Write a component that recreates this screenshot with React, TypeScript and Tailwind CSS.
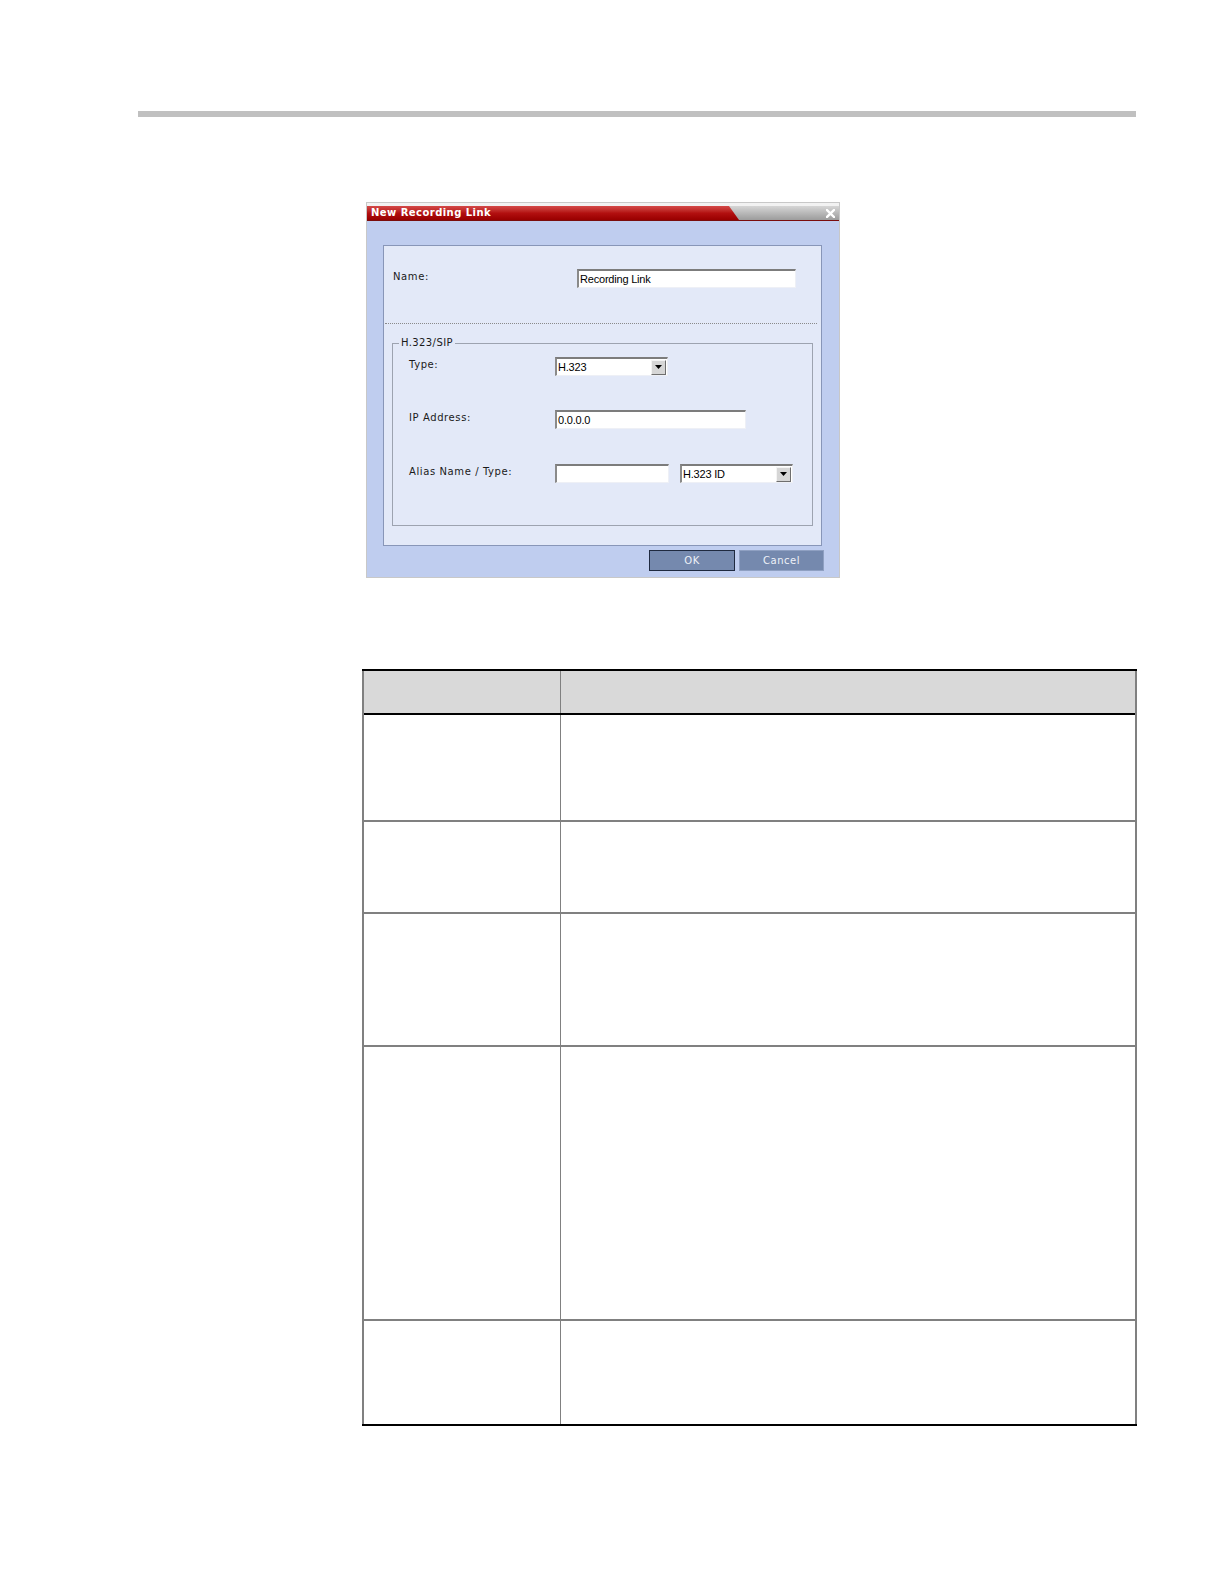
import React from 'react';

const labelFont = { fontFamily: '"DejaVu Sans", Verdana, sans-serif' };
const inputFont = { fontFamily: '"Liberation Sans", Arial, sans-serif' };

const TextBox: React.FC<{ width: string; value?: string }> = ({ width, value }) => (
  <div
    className={`${width} h-[19px] bg-white border-t-2 border-l-2 border-b border-r border-t-[#7c7c7c] border-l-[#8a8a8a] border-b-[#eef0f6] border-r-[#eef0f6] flex items-center pl-[1px] text-[11px] leading-none text-black tracking-[-0.2px]`}
    style={inputFont}
  >
    {value}
  </div>
);

const SelectBox: React.FC<{ width: string; value: string }> = ({ width, value }) => (
  <div
    className={`${width} h-[19px] bg-white border-t-2 border-l-2 border-b border-r border-t-[#7c7c7c] border-l-[#8a8a8a] border-b-[#eef0f6] border-r-[#eef0f6] flex items-center justify-between text-[11px] leading-none text-black tracking-[-0.2px]`}
    style={inputFont}
  >
    <span className="pl-[1px]">{value}</span>
    <div className="w-[15px] h-[15px] mr-[1px] bg-[#d6d6d6] border border-t-[#f4f4f4] border-l-[#f4f4f4] border-b-[#6e6e6e] border-r-[#6e6e6e] flex items-center justify-center">
      <svg width="7" height="4" viewBox="0 0 7 4">
        <path d="M0 0 H7 L3.5 4 Z" fill="#000" />
      </svg>
    </div>
  </div>
);

const Row: React.FC<{ label: string; children: React.ReactNode; className?: string }> = ({ label, children, className }) => (
  <div className={`flex items-center h-[19px] ${className ?? ''}`}>
    <div className="w-[162px] pl-[16px] pb-[4px] text-[10px] leading-none tracking-[0.6px] text-[#1a1a1a]" style={labelFont}>
      {label}
    </div>
    {children}
  </div>
);

const TableRow: React.FC<{ height: string; last?: boolean }> = ({ height, last }) => (
  <div className={`flex ${height} ${last ? '' : 'border-b-2 border-[#808080]'}`}>
    <div className="w-[197px] border-r border-[#808080]" />
    <div className="flex-1" />
  </div>
);

export default function App() {
  return (
    <div className="w-[1224px] h-[1584px] bg-white flex flex-col">
      {/* top rule */}
      <div className="mt-[111px] ml-[138px] w-[998px] h-[6px] bg-[#c0c0c0]" />

      {/* dialog */}
      <div className="mt-[85px] ml-[366px] w-[474px] h-[376px] border border-[#c8c8c8] bg-[#bfcdef] flex flex-col">
        <div className="h-[3px] bg-[#f2f2f2]" />
        <div className="h-[15px] flex bg-gradient-to-b from-[#d6d6d6] to-[#9c9c9c] border-b border-[#7a0c0c]">
          <div
            className="w-[372px] h-full bg-gradient-to-b from-[#d44848] via-[#b31010] to-[#980000] [clip-path:polygon(0_0,362px_0,372px_100%,0_100%)] flex items-center pl-[4px] text-white text-[10px] font-bold leading-none tracking-[0.45px]"
            style={labelFont}
          >
            New Recording Link
          </div>
          <div className="flex-1" />
          <div className="w-[14px] flex items-center justify-center mr-[2px]">
            <svg width="9" height="9" viewBox="0 0 9 9">
              <path d="M1 1 L8 8 M8 1 L1 8" stroke="#ffffff" strokeWidth="2.4" strokeLinecap="square" />
            </svg>
          </div>
        </div>

        {/* panel */}
        <div className="mt-[24px] ml-[16px] w-[439px] h-[301px] bg-[#e3e9f8] border border-[#8896b8] flex flex-col">
          <div className="mt-[23px] flex items-center h-[19px]">
            <div className="w-[193px] pl-[9px] pb-[4px] text-[10px] leading-none tracking-[0.6px] text-[#1a1a1a]" style={labelFont}>
              Name:
            </div>
            <TextBox width="w-[219px]" value="Recording Link" />
          </div>

          <div className="mt-[35px] ml-[1px] mr-[4px] border-t border-dotted border-[#8a8a8a]" />

          <fieldset className="mt-[13px] ml-[8px] w-[421px] h-[189px] border border-[#9da3b0]">
            <legend className="ml-[6px] px-[2px] text-[10px] leading-[12px] tracking-[0.4px] text-[#1a1a1a]" style={labelFont}>
              H.323/SIP
            </legend>
            <Row label="Type:" className="mt-[8px]">
              <SelectBox width="w-[113px]" value="H.323" />
            </Row>
            <Row label="IP Address:" className="mt-[34px]">
              <TextBox width="w-[191px]" value="0.0.0.0" />
            </Row>
            <Row label="Alias Name / Type:" className="mt-[35px]">
              <TextBox width="w-[114px]" />
              <div className="ml-[11px]">
                <SelectBox width="w-[113px]" value="H.323 ID" />
              </div>
            </Row>
          </fieldset>
        </div>

        {/* buttons */}
        <div className="mt-[4px] flex justify-end gap-[4px] pr-[15px]">
          <button
            className="w-[86px] h-[21px] bg-[#7589ae] border border-[#1f2a40] text-[#eef1f8] text-[10px] leading-none tracking-[0.5px]"
            style={labelFont}
          >
            OK
          </button>
          <button
            className="w-[85px] h-[21px] bg-[#7589ae] border border-[#8fa0c2] text-[#eef1f8] text-[10px] leading-none tracking-[0.5px]"
            style={labelFont}
          >
            Cancel
          </button>
        </div>
      </div>

      {/* table */}
      <div className="mt-[91px] ml-[362px] w-[775px] border-t-2 border-b-2 border-black">
        <div className="border-l-2 border-r-2 border-[#808080]">
          <div className="flex h-[44px] bg-[#d9d9d9] border-b-2 border-black">
            <div className="w-[197px] border-r border-[#808080]" />
            <div className="flex-1" />
          </div>
          <TableRow height="h-[107px]" />
          <TableRow height="h-[92px]" />
          <TableRow height="h-[133px]" />
          <TableRow height="h-[274px]" />
          <TableRow height="h-[103px]" last />
        </div>
      </div>
    </div>
  );
}
